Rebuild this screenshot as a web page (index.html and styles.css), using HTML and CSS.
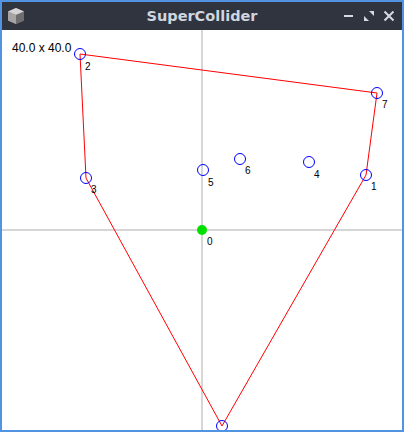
FILE: index.html
```html
<!DOCTYPE html>
<html>
<head>
<meta charset="utf-8">
<link rel="stylesheet" href="styles.css">
</head>
<body>
<div class="window">
  <div class="titlebar">
    <div class="app-icon">
      <svg width="22" height="22" viewBox="0 0 22 22">
        <polygon points="3,6.5 11,3 19,6.5 19,15.5 11,19 3,15.5" fill="#8a8a8a"/>
        <polygon points="3,6.5 11,3 19,6.5 11,10" fill="#d4d4d4"/>
        <polygon points="11,10 19,6.5 19,15.5 11,19" fill="#6e6e6e"/>
        <polygon points="3,6.5 11,10 11,19 3,15.5" fill="#a4a4a4"/>
      </svg>
    </div>
    <div class="title">SuperCollider</div>
    <div class="controls">
      <svg class="ctl" width="12" height="12" viewBox="0 0 12 12"><rect x="1" y="5" width="9" height="2" fill="#d3dae3"/></svg>
      <svg class="ctl" width="12" height="12" viewBox="0 0 12 12"><polygon points="6,1 11,1 11,6" fill="#d3dae3"/><polygon points="1,6 1,11 6,11" fill="#d3dae3"/></svg>
      <svg class="ctl" width="12" height="12" viewBox="0 0 12 12"><path d="M1.5 1.5 L10.5 10.5 M10.5 1.5 L1.5 10.5" stroke="#d3dae3" stroke-width="2"/></svg>
    </div>
  </div>
  <div class="content">
    <svg class="canvas" width="400" height="400" viewBox="0 0 400 400">
      <line x1="200" y1="0" x2="200" y2="400" class="grid"/>
      <line x1="0" y1="200" x2="400" y2="200" class="grid"/>
      <polyline class="poly" points="78,24 375,63 364,145 220,396 84,148 78,24"/>
      <circle cx="200" cy="200" r="5" class="origin"/>
      <circle cx="364" cy="145" r="5.5" class="pt"/>
      <circle cx="78" cy="24" r="5.5" class="pt"/>
      <circle cx="84" cy="148" r="5.5" class="pt"/>
      <circle cx="307" cy="132" r="5.5" class="pt"/>
      <circle cx="201" cy="140" r="5.5" class="pt"/>
      <circle cx="238" cy="129" r="5.5" class="pt"/>
      <circle cx="375" cy="63" r="5.5" class="pt"/>
      <circle cx="220" cy="396" r="5.5" class="pt"/>
      <text x="205" y="215" class="lbl">0</text>
      <text x="369" y="160" class="lbl">1</text>
      <text x="83" y="40" class="lbl">2</text>
      <text x="89" y="163" class="lbl">3</text>
      <text x="312" y="148" class="lbl">4</text>
      <text x="206" y="156" class="lbl">5</text>
      <text x="243" y="144" class="lbl">6</text>
      <text x="380" y="78" class="lbl">7</text>
      <text x="10" y="22" class="size">40.0 x 40.0</text>
    </svg>
  </div>
</div>
</body>
</html>
```
FILE: styles.css
```css
html, body {
  margin: 0;
  padding: 0;
  background: #5294e2;
}
.window {
  width: 404px;
  height: 432px;
  box-sizing: border-box;
  padding: 2px;
  background: #5294e2;
  display: flex;
  flex-direction: column;
}
.titlebar {
  height: 28px;
  background: #2f343f;
  display: flex;
  align-items: center;
  position: relative;
}
.app-icon {
  width: 22px;
  height: 22px;
  margin-left: 3px;
  display: flex;
}
.title {
  position: absolute;
  left: 0;
  right: 0;
  text-align: center;
  font-family: "DejaVu Sans", sans-serif;
  font-weight: bold;
  font-size: 14.5px;
  color: #cfd6e0;
  pointer-events: none;
}
.controls {
  margin-left: auto;
  margin-right: 7px;
  display: flex;
  gap: 8px;
  align-items: center;
}
.ctl {
  display: block;
}
.content {
  width: 400px;
  height: 400px;
  background: #ffffff;
  overflow: hidden;
}
.canvas {
  display: block;
}
.grid {
  stroke: #d6d6d6;
  stroke-width: 2;
}
.poly {
  fill: none;
  stroke: #ff0000;
  stroke-width: 1;
}
.pt {
  fill: none;
  stroke: #0000ff;
  stroke-width: 1;
}
.origin {
  fill: #00e000;
}
.lbl {
  font-family: "Liberation Sans", Arial, sans-serif;
  font-size: 10px;
  fill: #000;
}
.size {
  font-family: "Liberation Sans", Arial, sans-serif;
  font-size: 12px;
  fill: #000;
}
```
